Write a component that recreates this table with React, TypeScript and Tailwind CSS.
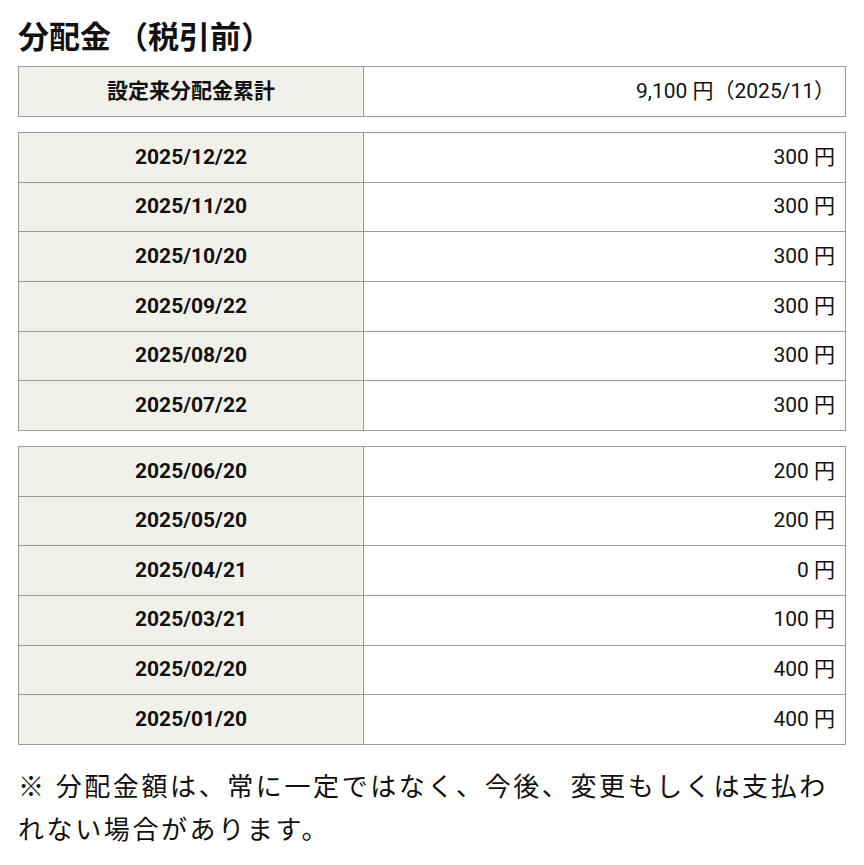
import React from 'react';

const RECENT = [
  { date: '2025/12/22', amount: '300' },
  { date: '2025/11/20', amount: '300' },
  { date: '2025/10/20', amount: '300' },
  { date: '2025/09/22', amount: '300' },
  { date: '2025/08/20', amount: '300' },
  { date: '2025/07/22', amount: '300' },
];

const EARLIER = [
  { date: '2025/06/20', amount: '200' },
  { date: '2025/05/20', amount: '200' },
  { date: '2025/04/21', amount: '0' },
  { date: '2025/03/21', amount: '100' },
  { date: '2025/02/20', amount: '400' },
  { date: '2025/01/20', amount: '400' },
];

const FONT = "font-['Roboto','Noto_Sans_CJK_JP',sans-serif]";

const Row: React.FC<{ label: string; value: string }> = ({ label, value }) => (
  <tr className="h-[49.67px]">
    <th className="w-[345px] border border-[#9a9a9a] bg-[#f2f0ea] text-center text-[21px] font-bold text-[#111]">
      {label}
    </th>
    <td className="border border-[#9a9a9a] bg-white pr-[10px] text-right text-[21px] text-[#111]">{value}</td>
  </tr>
);

const DistTable: React.FC<{ rows: { date: string; amount: string }[] }> = ({ rows }) => (
  <table className="w-full border-collapse">
    <tbody>
      {rows.map((r) => (
        <Row key={r.date} label={r.date} value={`${r.amount} 円`} />
      ))}
    </tbody>
  </table>
);

export default function App() {
  return (
    <div className={`${FONT} min-h-screen bg-white px-[18px] pt-[18px] text-[#111]`}>
      <h1 className="text-[31px] font-bold leading-[40px]">
        分配金<span className="ml-[6px]">（税引前）</span>
      </h1>

      <table className="mt-[8px] w-full border-collapse">
        <tbody>
          <tr className="h-[50px]">
            <th className="w-[345px] border border-[#9a9a9a] bg-[#f2f0ea] text-center text-[21px] font-bold">
              設定来分配金累計
            </th>
            <td className="border border-[#9a9a9a] pr-[10px] text-right text-[21px]">9,100 円（2025/11）</td>
          </tr>
        </tbody>
      </table>

      <div className="mt-[15px]">
        <DistTable rows={RECENT} />
      </div>
      <div className="mt-[15px]">
        <DistTable rows={EARLIER} />
      </div>

      <p className="mt-[21px] text-[26px] leading-[43px] tracking-[2.6px]">
        ※ 分配金額は、常に一定ではなく、今後、変更もしくは支払われない場合があります。
      </p>
    </div>
  );
}
